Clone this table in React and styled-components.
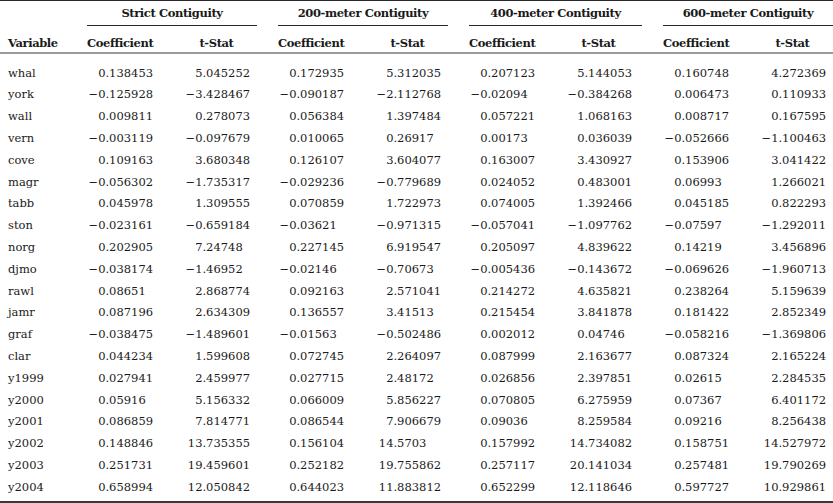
import React from "react";
import styled, { createGlobalStyle } from "styled-components";

const Global = createGlobalStyle`
  html, body { margin: 0; padding: 0; background: #ffffff; }
  body { color: #1a1a1a; }
`;

const TEMPLATE = "66px 170px 170px 173px 170px";

const Table = styled.div`
  width: 833px;
  border-top: 1px solid #2a2a2a;
  border-bottom: 2px solid #3a3a3a;
  font-family: "DejaVu Serif", "Liberation Serif", serif;
  font-size: 11.5px;
  color: #1a1a1a;
`;

const GroupRow = styled.div`
  display: grid;
  grid-template-columns: ${TEMPLATE};
  column-gap: 21px;
  height: 25px;
`;

const GroupTitle = styled.div`
  font-weight: 700;
  font-size: 11.5px;
  letter-spacing: -0.4px;
  line-height: 17px;
  text-align: center;
  padding-top: 4px;
  border-bottom: 1px solid #2a2a2a;
  box-sizing: border-box;
`;

const HeadRow = styled.div`
  display: grid;
  grid-template-columns: ${TEMPLATE};
  column-gap: 21px;
  height: 28px;
  padding-top: 9px;
  box-sizing: border-box;
  border-bottom: 2px solid #9a9a9a;
  font-weight: 700;
  font-size: 11.5px;
  letter-spacing: -0.4px;
  line-height: 17px;
`;

const VarHead = styled.div`
  padding-left: 8px;
`;

const Pair = styled.div`
  display: grid;
  grid-template-columns: 66px 97px;
`;

const ColHead = styled.div`
  text-align: center;
  padding-left: ${(p) => (p.$stat ? "30px" : "0")};
`;

const Body = styled.div`
  padding: 7.7px 0 3px;
`;

const Row = styled.div`
  display: grid;
  grid-template-columns: ${TEMPLATE};
  column-gap: 21px;
  height: 21.8px;
  align-items: center;
  line-height: 16px;
`;

const Label = styled.div`
  padding-left: 8px;
`;

const Num = styled.div`
  display: flex;
  justify-content: flex-end;
  white-space: nowrap;
  padding-left: ${(p) => (p.$stat ? "30px" : "0")};
`;

const Frac = styled.span`
  display: inline-block;
  width: 6.5ch;
  text-align: left;
`;

const groups = [
  "Strict Contiguity",
  "200-meter Contiguity",
  "400-meter Contiguity",
  "600-meter Contiguity",
];

const rows = [
  ["whal", "0.138453", "5.045252", "0.172935", "5.312035", "0.207123", "5.144053", "0.160748", "4.272369"],
  ["york", "−0.125928", "−3.428467", "−0.090187", "−2.112768", "−0.02094", "−0.384268", "0.006473", "0.110933"],
  ["wall", "0.009811", "0.278073", "0.056384", "1.397484", "0.057221", "1.068163", "0.008717", "0.167595"],
  ["vern", "−0.003119", "−0.097679", "0.010065", "0.26917", "0.00173", "0.036039", "−0.052666", "−1.100463"],
  ["cove", "0.109163", "3.680348", "0.126107", "3.604077", "0.163007", "3.430927", "0.153906", "3.041422"],
  ["magr", "−0.056302", "−1.735317", "−0.029236", "−0.779689", "0.024052", "0.483001", "0.06993", "1.266021"],
  ["tabb", "0.045978", "1.309555", "0.070859", "1.722973", "0.074005", "1.392466", "0.045185", "0.822293"],
  ["ston", "−0.023161", "−0.659184", "−0.03621", "−0.971315", "−0.057041", "−1.097762", "−0.07597", "−1.292011"],
  ["norg", "0.202905", "7.24748", "0.227145", "6.919547", "0.205097", "4.839622", "0.14219", "3.456896"],
  ["djmo", "−0.038174", "−1.46952", "−0.02146", "−0.70673", "−0.005436", "−0.143672", "−0.069626", "−1.960713"],
  ["rawl", "0.08651", "2.868774", "0.092163", "2.571041", "0.214272", "4.635821", "0.238264", "5.159639"],
  ["jamr", "0.087196", "2.634309", "0.136557", "3.41513", "0.215454", "3.841878", "0.181422", "2.852349"],
  ["graf", "−0.038475", "−1.489601", "−0.01563", "−0.502486", "0.002012", "0.04746", "−0.058216", "−1.369806"],
  ["clar", "0.044234", "1.599608", "0.072745", "2.264097", "0.087999", "2.163677", "0.087324", "2.165224"],
  ["y1999", "0.027941", "2.459977", "0.027715", "2.48172", "0.026856", "2.397851", "0.02615", "2.284535"],
  ["y2000", "0.05916", "5.156332", "0.066009", "5.856227", "0.070805", "6.275959", "0.07367", "6.401172"],
  ["y2001", "0.086859", "7.814771", "0.086544", "7.906679", "0.09036", "8.259584", "0.09216", "8.256438"],
  ["y2002", "0.148846", "13.735355", "0.156104", "14.5703", "0.157992", "14.734082", "0.158751", "14.527972"],
  ["y2003", "0.251731", "19.459601", "0.252182", "19.755862", "0.257117", "20.141034", "0.257481", "19.790269"],
  ["y2004", "0.658994", "12.050842", "0.644023", "11.883812", "0.652299", "12.118646", "0.597727", "10.929861"],
];

function Value({ v, stat }) {
  const i = v.indexOf(".");
  return (
    <Num $stat={stat}>
      <span>{v.slice(0, i)}</span>
      <Frac>{v.slice(i)}</Frac>
    </Num>
  );
}

export default function App() {
  return (
    <>
      <Global />
      <Table>
        <GroupRow>
          <div />
          {groups.map((g) => (
            <GroupTitle key={g}>{g}</GroupTitle>
          ))}
        </GroupRow>
        <HeadRow>
          <VarHead>Variable</VarHead>
          {groups.map((g) => (
            <Pair key={g}>
              <ColHead>Coefficient</ColHead>
              <ColHead $stat>t-Stat</ColHead>
            </Pair>
          ))}
        </HeadRow>
        <Body>
          {rows.map((r) => (
            <Row key={r[0]}>
              <Label>{r[0]}</Label>
              {[0, 1, 2, 3].map((g) => (
                <Pair key={g}>
                  <Value v={r[1 + g * 2]} />
                  <Value v={r[2 + g * 2]} stat />
                </Pair>
              ))}
            </Row>
          ))}
        </Body>
      </Table>
    </>
  );
}
